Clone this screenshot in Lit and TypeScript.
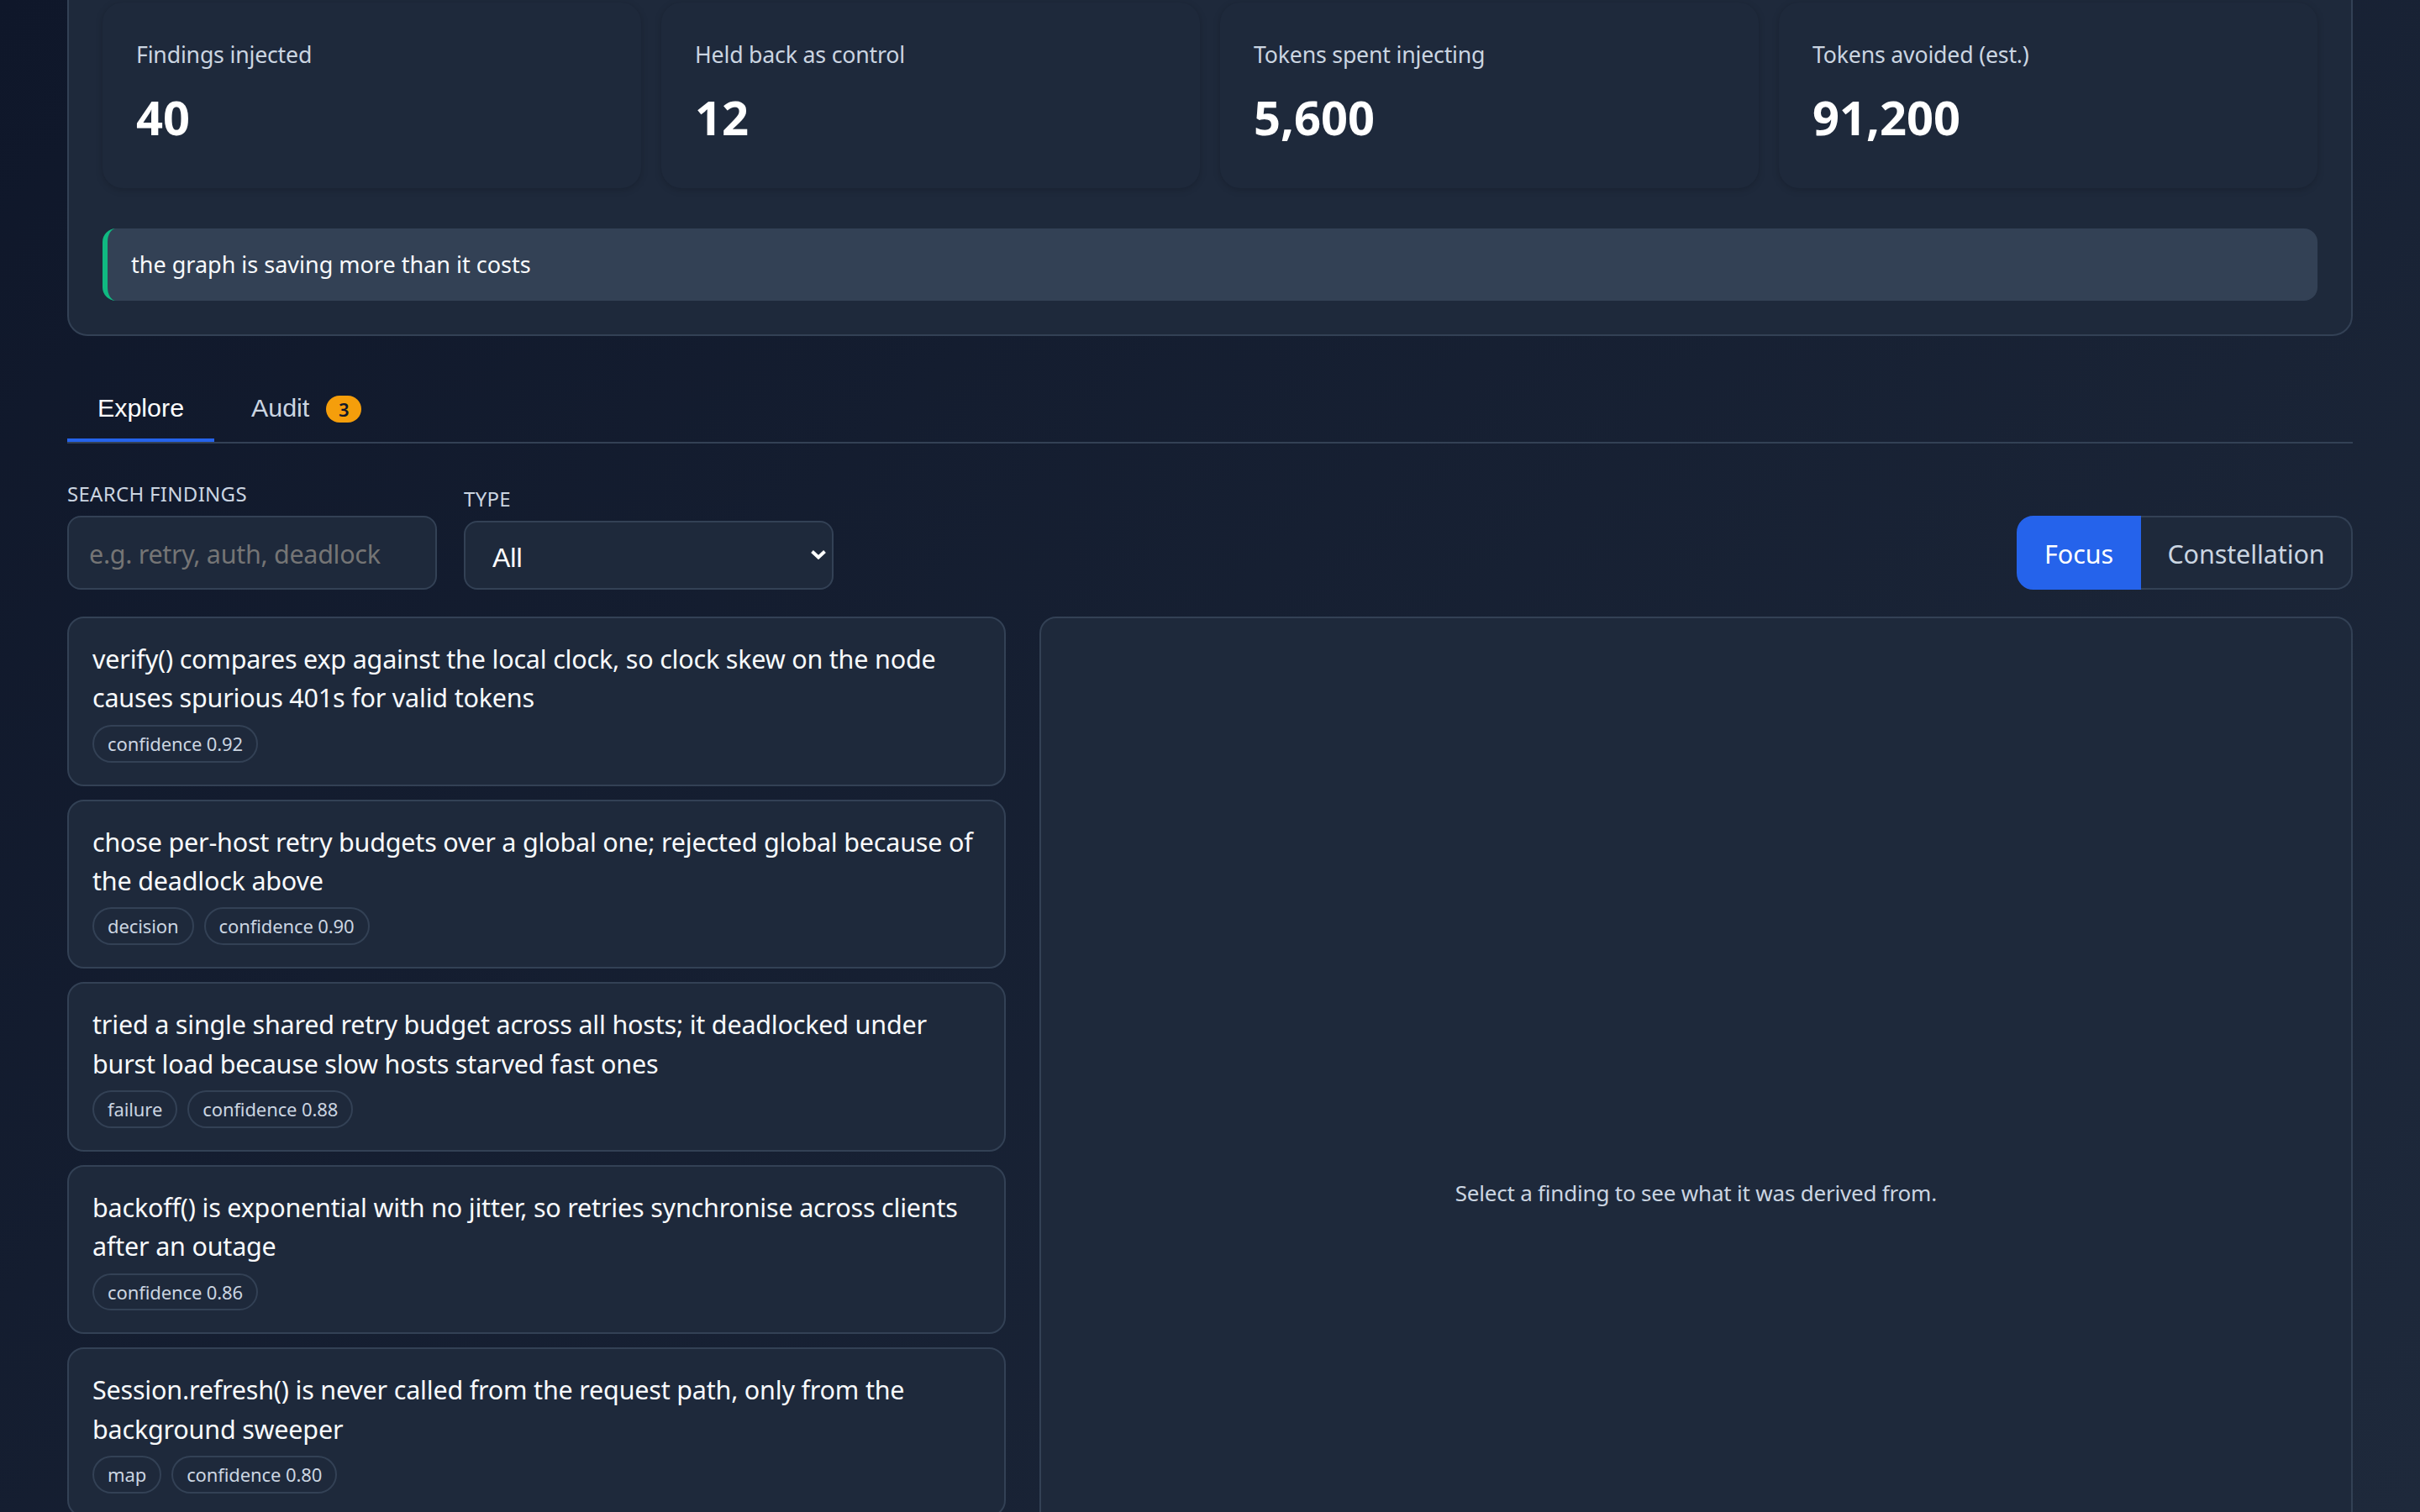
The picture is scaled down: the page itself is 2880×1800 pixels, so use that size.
import { LitElement, html, css } from "lit";
import { customElement } from "lit/decorators.js";

const stats = [
  ["Findings injected", "40"],
  ["Held back as control", "12"],
  ["Tokens spent injecting", "5,600"],
  ["Tokens avoided (est.)", "91,200"],
];

const findings: [string, string[]][] = [
  ["verify() compares exp against the local clock, so clock skew on the node causes spurious 401s for valid tokens", ["confidence 0.92"]],
  ["chose per-host retry budgets over a global one; rejected global because of the deadlock above", ["decision", "confidence 0.90"]],
  ["tried a single shared retry budget across all hosts; it deadlocked under burst load because slow hosts starved fast ones", ["failure", "confidence 0.88"]],
  ["backoff() is exponential with no jitter, so retries synchronise across clients after an outage", ["confidence 0.86"]],
  ["Session.refresh() is never called from the request path, only from the background sweeper", ["map", "confidence 0.80"]],
];

@customElement("app-root")
export class AppRoot extends LitElement {
  static styles = css`
    :host {
      display: block;
      height: 1800px;
      overflow: hidden;
      box-sizing: border-box;
      padding: 0 80px;
      background: linear-gradient(135deg, #0f172a 0%, #1e293b 100%);
      font-family: "Noto Sans", "Open Sans", sans-serif;
      color: #f8fafc;
      font-size: 30.5px;
      line-height: 1.45;
    }
    * { box-sizing: border-box; }
    .panel {
      margin-top: -39px;
      padding: 40px;
      background: #1e293b;
      border: 2px solid #334155;
      border-radius: 24px;
    }
    .stats {
      display: grid;
      grid-template-columns: repeat(4, 1fr);
      gap: 24px;
    }
    .stat {
      height: 221px;
      padding: 42px 40px 0;
      background: #1e293b;
      border-radius: 24px;
      box-shadow: 0 2px 8px rgba(0, 0, 0, 0.18);
    }
    .stat-label {
      font-size: 26.7px;
      line-height: 40px;
      color: #cbd5e1;
      letter-spacing: -0.19px;
    }
    .stat-value {
      margin-top: 14px;
      font-size: 56px;
      line-height: 81px;
      font-weight: 700;
      color: #fff;
    }
    .callout {
      margin-top: 48px;
      height: 86px;
      display: flex;
      align-items: center;
      padding-left: 28px;
      background: #334155;
      border-left: 6px solid #10b981;
      border-radius: 16px;
      font-size: 27px;
    }
    .tabs {
      margin-top: 44px;
      display: flex;
      gap: 8px;
      height: 84px;
      border-bottom: 2px solid #334155;
    }
    .tab {
      display: flex;
      align-items: center;
      padding: 4px 36px 0;
      background: none;
      border: none;
      border-bottom: 4px solid transparent;
      color: #cbd5e1;
      font-family: "Liberation Sans", Arial, sans-serif;
      font-size: 30.4px;
    }
    .tab.active { color: #fff; border-bottom-color: #2563eb; }
    .badge {
      margin: 3px 0 0 20px;
      width: 42px;
      height: 32px;
      display: flex;
      align-items: center;
      justify-content: center;
      border-radius: 16px;
      background: #f59e0b;
      color: #0f172a;
      font-family: "Noto Sans", sans-serif;
      font-size: 22px;
      font-weight: 600;
    }
    .toolbar {
      margin-top: 43px;
      display: flex;
      align-items: flex-end;
      gap: 32px;
    }
    .field { display: flex; flex-direction: column; gap: 9px; width: 440px; }
    .field label {
      font-size: 24px;
      line-height: 34px;
      text-transform: uppercase;
      letter-spacing: 0.3px;
      color: #cbd5e1;
    }
    input {
      height: 88px;
      padding: 2px 24px 0;
      background: #1e293b;
      border: 2px solid #334155;
      border-radius: 16px;
      color: #fff;
      font-family: inherit;
      font-size: 30.5px;
      letter-spacing: -0.3px;
      outline: none;
    }
    .select-wrap { position: relative; display: flex; }
    select {
      width: 100%;
      height: 82px;
      padding: 6px 32px 0;
      appearance: none;
      background: #1e293b;
      border: 2px solid #334155;
      border-radius: 16px;
      color: #fff;
      font-family: "Liberation Sans", Arial, sans-serif;
      font-size: 32px;
    }
    .chevron {
      position: absolute;
      right: 9px;
      top: 35px;
      width: 18px;
      height: 11px;
      pointer-events: none;
    }
    .toggle {
      margin-left: auto;
      display: flex;
    }
    .toggle button {
      margin: 0;
      padding: 2px 0 0;
      height: 88px;
      font-family: inherit;
      font-size: 30.5px;
      letter-spacing: -0.1px;
    }
    .toggle .focus {
      width: 148px;
      background: #2563eb;
      border: 2px solid #2563eb;
      border-radius: 20px 0 0 20px;
      color: #fff;
    }
    .toggle .constellation {
      width: 252px;
      background: #1e293b;
      border: 2px solid #334155;
      border-left: none;
      border-radius: 0 20px 20px 0;
      color: #cbd5e1;
    }
    .grid {
      margin-top: 32px;
      display: grid;
      grid-template-columns: 1fr 1.4fr;
      gap: 40px;
      align-items: start;
    }
    .list { display: flex; flex-direction: column; gap: 16px; }
    .card {
      padding: 25px 28px 26px;
      background: #1e293b;
      border: 2px solid #334155;
      border-radius: 20px;
    }
    .text { font-size: 30.5px; line-height: 46.4px; letter-spacing: -0.2px; }
    .tags { margin-top: 9px; display: flex; gap: 12px; }
    .tag {
      padding: 3px 16px;
      border: 2px solid #334155;
      border-radius: 999px;
      font-size: 22px;
      line-height: 34.8px;
      color: #cbd5e1;
      letter-spacing: -0.1px;
    }
    .detail {
      height: 1374px;
      display: flex;
      align-items: center;
      justify-content: center;
      background: #1e293b;
      border: 2px solid #334155;
      border-radius: 20px;
      font-size: 26px;
      color: #cbd5e1;
      letter-spacing: -0.2px;
    }
  `;

  render() {
    return html`
      <section class="panel">
        <div class="stats">
          ${stats.map(
            ([label, value]) => html`
              <div class="stat">
                <div class="stat-label">${label}</div>
                <div class="stat-value">${value}</div>
              </div>
            `
          )}
        </div>
        <div class="callout">the graph is saving more than it costs</div>
      </section>
      <nav class="tabs">
        <button class="tab active">Explore</button>
        <button class="tab">Audit<span class="badge">3</span></button>
      </nav>
      <div class="toolbar">
        <div class="field">
          <label>Search findings</label>
          <input placeholder="e.g. retry, auth, deadlock" />
        </div>
        <div class="field">
          <label>Type</label>
          <div class="select-wrap">
            <select><option>All</option></select>
            <svg class="chevron" viewBox="0 0 18 11" fill="none" stroke="#fff" stroke-width="4">
              <path d="M1.5 1.5 L9 8.5 L16.5 1.5" />
            </svg>
          </div>
        </div>
        <div class="toggle">
          <button class="focus">Focus</button>
          <button class="constellation">Constellation</button>
        </div>
      </div>
      <div class="grid">
        <div class="list">
          ${findings.map(
            ([text, tags]) => html`
              <article class="card">
                <div class="text">${text}</div>
                <div class="tags">${tags.map((t) => html`<span class="tag">${t}</span>`)}</div>
              </article>
            `
          )}
        </div>
        <div class="detail">Select a finding to see what it was derived from.</div>
      </div>
    `;
  }
}
